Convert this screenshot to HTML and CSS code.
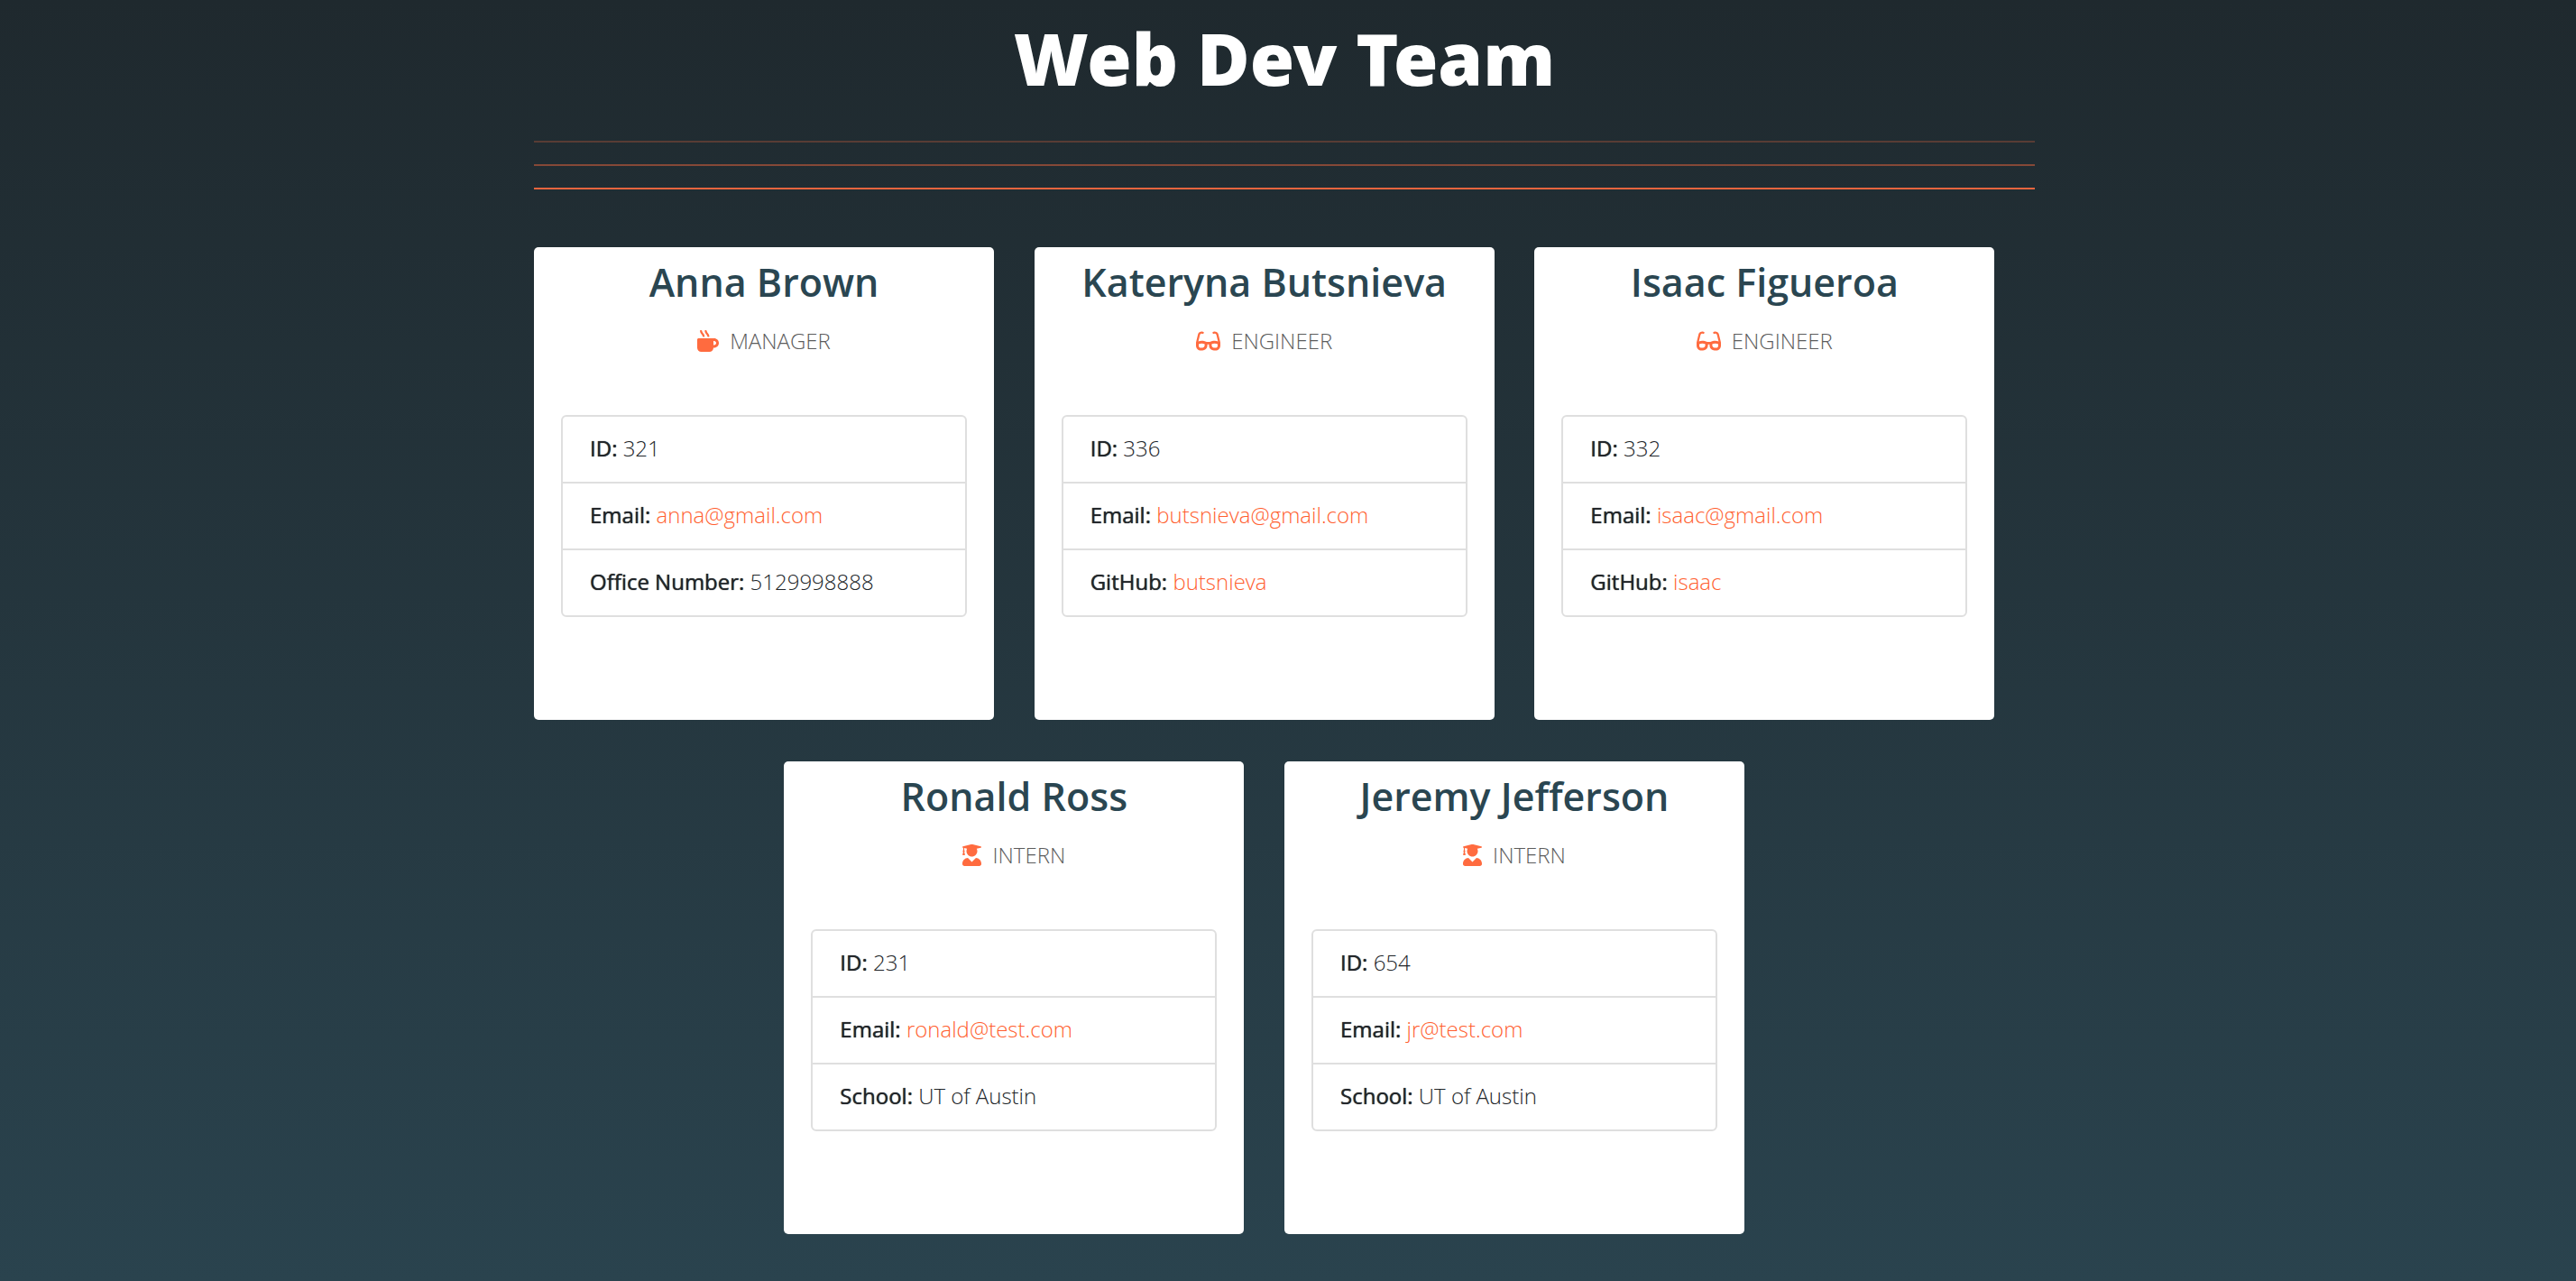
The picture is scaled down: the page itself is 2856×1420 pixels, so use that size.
FILE: index.html
```html
<!DOCTYPE html>
<html lang="en">
<head>
  <meta charset="utf-8">
  <meta name="viewport" content="width=device-width, initial-scale=1">
  <title>Web Dev Team</title>
  <link rel="stylesheet" href="styles.css">
</head>
<body>
  <svg class="sprite" aria-hidden="true">
    <symbol id="mug" viewBox="0 0 512 512"><path d="M127.1 146.5c1.3 7.7 8 13.5 16 13.5h16.5c9.8 0 17.6-8.5 16.3-18-3.8-28.2-16.4-54.2-36.6-74.7-14.4-14.7-23.6-33.3-26.4-53.5C111.8 5.9 105 0 96.8 0H80.4C70.6 0 63 8.5 64.1 18c3.9 31.9 18 61.3 40.6 84.4 12 12.2 19.7 27.5 22.4 44.1zm112 0c1.3 7.7 8 13.5 16 13.5h16.5c9.8 0 17.6-8.5 16.3-18-3.8-28.2-16.4-54.2-36.6-74.7-14.4-14.7-23.6-33.3-26.4-53.5C223.8 5.9 217 0 208.8 0h-16.4c-9.8 0-17.5 8.5-16.3 18 3.9 31.9 18 61.3 40.6 84.4 12 12.2 19.7 27.5 22.4 44.1zM400 192H32c-17.7 0-32 14.3-32 32v192c0 53 43 96 96 96h192c53 0 96-43 96-96h16c61.8 0 112-50.2 112-112s-50.2-112-112-112zm0 160h-16v-96h16c26.5 0 48 21.5 48 48s-21.5 48-48 48z"/></symbol>
    <symbol id="glasses" viewBox="0 0 576 512"><path d="M574.1 280.37L528.75 98.66c-5.91-23.7-21.59-44.05-43-55.81-21.44-11.73-46.97-14.11-70.19-6.33l-15.25 5.08c-8.39 2.79-12.92 11.86-10.12 20.24l5.06 15.18c2.79 8.38 11.85 12.91 20.23 10.12l13.18-4.39c10.87-3.62 23-3.57 33.16 1.73 10.29 5.37 17.57 14.56 20.37 25.82l38.46 153.82c-22.19-6.81-49.79-12.46-81.2-12.46-34.77 0-73.98 7.02-114.85 26.74h-73.18c-40.87-19.74-80.08-26.75-114.86-26.75-31.42 0-59.02 5.65-81.21 12.46l38.46-153.83c2.79-11.25 10.09-20.45 20.38-25.81 10.16-5.3 22.28-5.35 33.15-1.73l13.17 4.39c8.38 2.79 17.44-1.74 20.23-10.12l5.06-15.18c2.8-8.38-1.73-17.45-10.12-20.24l-15.25-5.08c-23.22-7.78-48.75-5.41-70.19 6.33-21.41 11.77-37.09 32.11-43 55.8L1.9 280.37A64.218 64.218 0 0 0 0 295.86v70.25C0 429.01 51.58 480 115.2 480h37.12c60.28 0 110.37-45.94 114.88-105.37l2.93-38.63h35.75l2.93 38.63C313.31 434.06 363.4 480 423.68 480h37.12c63.62 0 115.2-50.99 115.2-113.88v-70.25c0-5.23-.64-10.43-1.9-15.5zm-370.72 89.42c-1.97 25.91-24.4 46.21-51.06 46.21H115.2C86.97 416 64 393.62 64 366.11v-37.54c18.12-6.49 43.42-12.92 72.58-12.92 23.86 0 47.26 4.33 69.93 12.92l-3.13 41.22zM512 366.12c0 27.51-22.97 49.88-51.2 49.88h-37.12c-26.67 0-49.1-20.3-51.06-46.21l-3.13-41.22c22.67-8.59 46.08-12.92 69.95-12.92 29.12 0 54.43 6.44 72.55 12.93v37.54z"/></symbol>
    <symbol id="graduate" viewBox="0 0 448 512"><path d="M319.4 320.6L224 416l-95.4-95.4C57.1 323.7 0 382.2 0 454.4v9.6c0 26.5 21.5 48 48 48h352c26.5 0 48-21.5 48-48v-9.6c0-72.2-57.1-130.7-128.6-133.8zM13.6 79.8l6.4 1.5v58.4c-7 4.2-12 11.5-12 20.3 0 8.4 4.6 15.4 11.1 19.7L3.5 242c-1.7 6.9 2.1 14 7.6 14h41.8c5.5 0 9.3-7.1 7.6-14l-15.6-62.3C51.4 175.4 56 168.4 56 160c0-8.8-5-16.1-12-20.3V87.1l66 15.9c-8.6 17.2-14 36.4-14 57 0 70.7 57.3 128 128 128s128-57.3 128-128c0-20.6-5.3-39.8-14-57l96.3-23.2c18.2-4.4 18.2-27.1 0-31.5l-190.4-46c-13-3.1-26.7-3.1-39.7 0L13.6 48.2c-18.1 4.4-18.1 27.2 0 31.6z"/></symbol>
  </svg>

  <div class="page">
    <header class="header">
      <h1 class="title">Web Dev Team</h1>
      <div class="rules">
        <hr class="rule rule-faint">
        <hr class="rule rule-mid">
        <hr class="rule rule-strong">
      </div>
    </header>

    <main class="team">
      <div class="cell">
        <article class="card">
          <h2 class="name">Anna Brown</h2>
          <p class="role"><svg class="icon icon-mug"><use href="#mug"/></svg>MANAGER</p>
          <ul class="details">
            <li class="detail"><b class="label">ID:</b> 321</li>
            <li class="detail"><b class="label">Email:</b> <a class="link" href="mailto:anna@gmail.com">anna@gmail.com</a></li>
            <li class="detail"><b class="label">Office Number:</b> 5129998888</li>
          </ul>
        </article>
      </div>
      <div class="cell">
        <article class="card">
          <h2 class="name">Kateryna Butsnieva</h2>
          <p class="role"><svg class="icon icon-glasses"><use href="#glasses"/></svg>ENGINEER</p>
          <ul class="details">
            <li class="detail"><b class="label">ID:</b> 336</li>
            <li class="detail"><b class="label">Email:</b> <a class="link" href="mailto:butsnieva@gmail.com">butsnieva@gmail.com</a></li>
            <li class="detail"><b class="label">GitHub:</b> <a class="link" href="https://github.com/butsnieva">butsnieva</a></li>
          </ul>
        </article>
      </div>
      <div class="cell">
        <article class="card">
          <h2 class="name">Isaac Figueroa</h2>
          <p class="role"><svg class="icon icon-glasses"><use href="#glasses"/></svg>ENGINEER</p>
          <ul class="details">
            <li class="detail"><b class="label">ID:</b> 332</li>
            <li class="detail"><b class="label">Email:</b> <a class="link" href="mailto:isaac@gmail.com">isaac@gmail.com</a></li>
            <li class="detail"><b class="label">GitHub:</b> <a class="link" href="https://github.com/isaac">isaac</a></li>
          </ul>
        </article>
      </div>
      <div class="cell">
        <article class="card">
          <h2 class="name">Ronald Ross</h2>
          <p class="role"><svg class="icon icon-graduate"><use href="#graduate"/></svg>INTERN</p>
          <ul class="details">
            <li class="detail"><b class="label">ID:</b> 231</li>
            <li class="detail"><b class="label">Email:</b> <a class="link" href="mailto:ronald@test.com">ronald@test.com</a></li>
            <li class="detail"><b class="label">School:</b> UT of Austin</li>
          </ul>
        </article>
      </div>
      <div class="cell">
        <article class="card">
          <h2 class="name">Jeremy Jefferson</h2>
          <p class="role"><svg class="icon icon-graduate"><use href="#graduate"/></svg>INTERN</p>
          <ul class="details">
            <li class="detail"><b class="label">ID:</b> 654</li>
            <li class="detail"><b class="label">Email:</b> <a class="link" href="mailto:jr@test.com">jr@test.com</a></li>
            <li class="detail"><b class="label">School:</b> UT of Austin</li>
          </ul>
        </article>
      </div>
    </main>
  </div>
</body>
</html>
```
FILE: styles.css
```css
*,
*::before,
*::after {
  box-sizing: border-box;
}

body {
  margin: 0;
  min-height: 100vh;
  padding-right: 8px;
  background: linear-gradient(#1f292e, #2a434e);
  color: #212529;
  font: 300 24px/36px "Open Sans", sans-serif;
}

.sprite {
  display: none;
}

.page {
  max-width: 1664px;
  margin: 0 auto;
}

.header {
  padding: 16px 0 64px;
}

.title {
  margin: 0 0 44px;
  color: #fff;
  font: 900 80px/96px "Noto Sans", sans-serif;
  text-align: center;
}

.rules {
  display: grid;
  gap: 24px;
}

.rule {
  width: 100%;
  height: 2px;
  margin: 0;
  border: 0;
  background: #ff6b3f;
}

.rule-faint {
  opacity: 0.25;
}

.rule-mid {
  opacity: 0.45;
}

.rule-strong {
  opacity: 0.9;
}

/* three cells a row; a short last row is centred */
.team {
  display: flex;
  flex-wrap: wrap;
  justify-content: center;
  row-gap: 46px;
  padding-bottom: 46px;
}

.cell {
  flex: 0 0 calc(100% / 3);
  min-width: 510px;
}

.card {
  max-width: 510px;
  min-height: 524px;
  padding: 10px 30px 30px;
  border-radius: 5px;
  background: #fff;
}

.name {
  margin: 0 -20px 18px;
  color: #2a4651;
  font-size: 43px;
  font-weight: 600;
  line-height: 58px;
  text-align: center;
}

.role {
  display: flex;
  align-items: center;
  justify-content: center;
  gap: 12px;
  margin: 0 0 64px;
  color: #5c5c5c;
}

.icon {
  height: 24px;
  fill: #ff6b3f;
}

.icon-mug {
  width: 24px;
}

.icon-glasses {
  width: 27px;
}

.icon-graduate {
  width: 21px;
}

.details {
  margin: 0;
  padding: 0;
  border: 2px solid #dfdfdf;
  border-radius: 6px;
  list-style: none;
}

.detail {
  padding: 17px 30px 19px;
}

.detail + .detail {
  border-top: 2px solid #dfdfdf;
}

.label {
  font-weight: 400;
  text-shadow: 0 0 1px currentColor;
}

.link {
  color: #ff5f30;
  text-decoration: none;
}
```
